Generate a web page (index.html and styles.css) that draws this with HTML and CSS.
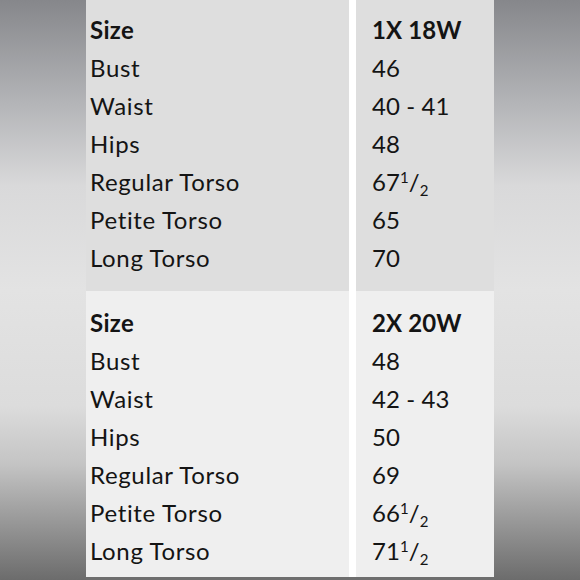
FILE: index.html
```html
<!DOCTYPE html>
<html>
<head>
<meta charset="utf-8">
<link rel="stylesheet" href="styles.css">
</head>
<body>
<div class="page">
  <div class="side"></div>
  <div class="chart">
    <div class="block dark">
      <div class="col label">
        <div class="row bold">Size</div>
        <div class="row">Bust</div>
        <div class="row">Waist</div>
        <div class="row">Hips</div>
        <div class="row">Regular Torso</div>
        <div class="row">Petite Torso</div>
        <div class="row">Long Torso</div>
      </div>
      <div class="col value">
        <div class="row bold">1X 18W</div>
        <div class="row">46</div>
        <div class="row">40 - 41</div>
        <div class="row">48</div>
        <div class="row">67<sup>1</sup>/<sub>2</sub></div>
        <div class="row">65</div>
        <div class="row">70</div>
      </div>
    </div>
    <div class="block light">
      <div class="col label">
        <div class="row bold">Size</div>
        <div class="row">Bust</div>
        <div class="row">Waist</div>
        <div class="row">Hips</div>
        <div class="row">Regular Torso</div>
        <div class="row">Petite Torso</div>
        <div class="row">Long Torso</div>
      </div>
      <div class="col value">
        <div class="row bold">2X 20W</div>
        <div class="row">48</div>
        <div class="row">42 - 43</div>
        <div class="row">50</div>
        <div class="row">69</div>
        <div class="row">66<sup>1</sup>/<sub>2</sub></div>
        <div class="row">71<sup>1</sup>/<sub>2</sub></div>
      </div>
    </div>
  </div>
  <div class="side"></div>
</div>
</body>
</html>
```

FILE: styles.css
```css
html, body {
  margin: 0;
  padding: 0;
}
body {
  width: 580px;
  height: 580px;
  overflow: hidden;
  font-family: Lato, "Liberation Sans", sans-serif;
  color: #141414;
  background: #6e6e6e;
}
.page {
  display: flex;
  height: 580px;
}
.side {
  width: 86px;
  flex: none;
  background: linear-gradient(to bottom, #86878b 0%, #b4b5b8 18%, #d9d9da 32%, #e3e3e3 50%, #dcdcdc 70%, #c4c4c4 80%, #8f8f8f 92%, #6c6c6c 100%);
}
.chart {
  width: 408px;
  height: 577px;
  flex: none;
  display: flex;
  flex-direction: column;
  background: #ffffff;
}
.block {
  display: flex;
  gap: 7px;
}
.dark {
  height: 291px;
}
.light {
  flex: 1;
}
.dark .col {
  background: #dedede;
  padding-top: 11px;
}
.light .col {
  background: #efefef;
  padding-top: 13px;
}
.col {
  display: flex;
  flex-direction: column;
  box-sizing: border-box;
}
.label {
  width: 263px;
  padding-left: 4px;
}
.value {
  width: 138px;
  padding-left: 16px;
}
.row {
  height: 38px;
  line-height: 38px;
  font-size: 24px;
  letter-spacing: 0.65px;
  white-space: nowrap;
  font-variant-ligatures: none;
}
.label .bold {
  letter-spacing: 0.3px;
}
.value .row {
  letter-spacing: 0.1px;
}
.bold {
  font-weight: 700;
}
sup, sub {
  font-size: 15px;
  line-height: 0;
  letter-spacing: 0;
  position: relative;
  vertical-align: baseline;
}
sup {
  top: -8px;
}
sub {
  top: 5px;
}
```
